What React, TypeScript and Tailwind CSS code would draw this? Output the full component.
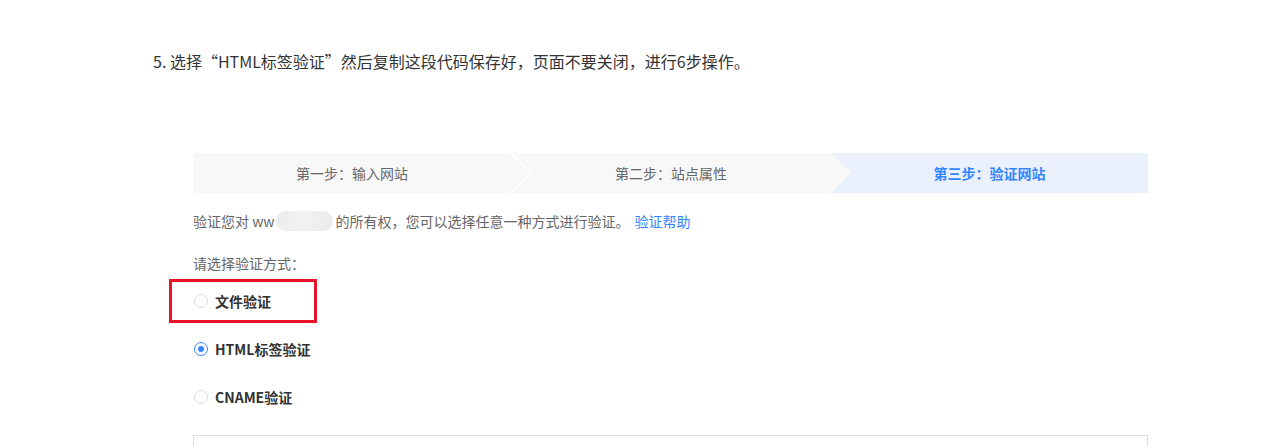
import React from 'react';

const steps = [
  { label: '第一步：输入网站', width: 'w-[318px]', bg: 'bg-[#f8f8f8]', text: 'text-[#666]', z: 'z-20', arrow: 'line' },
  { label: '第二步：站点属性', width: 'w-[320px]', bg: 'bg-[#f8f8f8]', text: 'text-[#666]', z: 'z-10', arrow: 'fill' },
  { label: '第三步：验证网站', width: 'flex-1', bg: 'bg-[#eaf1fd]', text: 'text-[#3385ff] font-bold', z: 'z-0', arrow: 'none' },
];

const methods = [
  { label: '文件验证', checked: false },
  { label: 'HTML标签验证', checked: true },
  { label: 'CNAME验证', checked: false },
];

const Radio = ({ checked }: { checked: boolean }) => (
  <span
    className={`w-[14px] h-[14px] rounded-full border flex items-center justify-center bg-white ${
      checked ? 'border-[#3385ff]' : 'border-[#dcdcdc]'
    }`}
  >
    {checked && <span className="w-[6px] h-[6px] rounded-full bg-[#3385ff]" />}
  </span>
);

const App = () => {
  return (
    <div
      className="w-[1284px] h-[446px] overflow-hidden bg-white pl-[153px] pt-[49px]"
      style={{ fontFamily: '"Noto Sans CJK SC", "Microsoft YaHei", sans-serif' }}
    >
      <p className="text-[16px] leading-6 text-[#333]">
        5. 选择“HTML标签验证”然后复制这段代码保存好，页面不要关闭，进行6步操作。
      </p>

      <div className="pl-10 w-[995px]">
        {/* steps */}
        <div className="mt-[80px] flex h-10">
          {steps.map((s, i) => (
            <div
              key={i}
              className={`relative ${s.width} ${s.bg} ${s.z} flex items-center justify-center text-[14px] ${s.text}`}
            >
              {s.label}
              {s.arrow !== 'none' && (
                <svg className="absolute top-0 right-[-20px]" width="20" height="40" viewBox="0 0 20 40">
                  <polygon points="0,0 20,20 0,40" fill="#f8f8f8" />
                  {s.arrow === 'line' && (
                    <polyline points="0,0 20,20 0,40" fill="none" stroke="#ffffff" strokeWidth="1.5" />
                  )}
                </svg>
              )}
            </div>
          ))}
        </div>

        <div className="mt-[18px] flex items-center text-[14px] leading-5 text-[#666]">
          <span>验证您对 ww</span>
          <span className="ml-[1px] w-[57px] h-5 rounded-full bg-gradient-to-r from-[#ececec] via-[#f2f2f2] to-[#eaeaea]" />
          <span className="ml-[3px]">的所有权，您可以选择任意一种方式进行验证。</span>
          <a className="ml-[5px] text-[#3385ff]">验证帮助</a>
        </div>

        <div className="mt-[22px] text-[14px] leading-5 text-[#666]">请选择验证方式：</div>

        <div className="relative mt-[4px]">
          {methods.map((m, i) => (
            <div key={i} className="h-12 flex items-center pl-[1px] gap-[7px]">
              <Radio checked={m.checked} />
              <span className="text-[14px] font-bold text-[#333]">{m.label}</span>
            </div>
          ))}
          <div className="absolute left-[-24px] top-[2px] w-[148px] h-[44px] border-[3px] border-[#e8132a]" />
        </div>

        <div className="mt-[14px] h-[100px] border border-[#dddddd]" />
      </div>
    </div>
  );
};

export default App;
